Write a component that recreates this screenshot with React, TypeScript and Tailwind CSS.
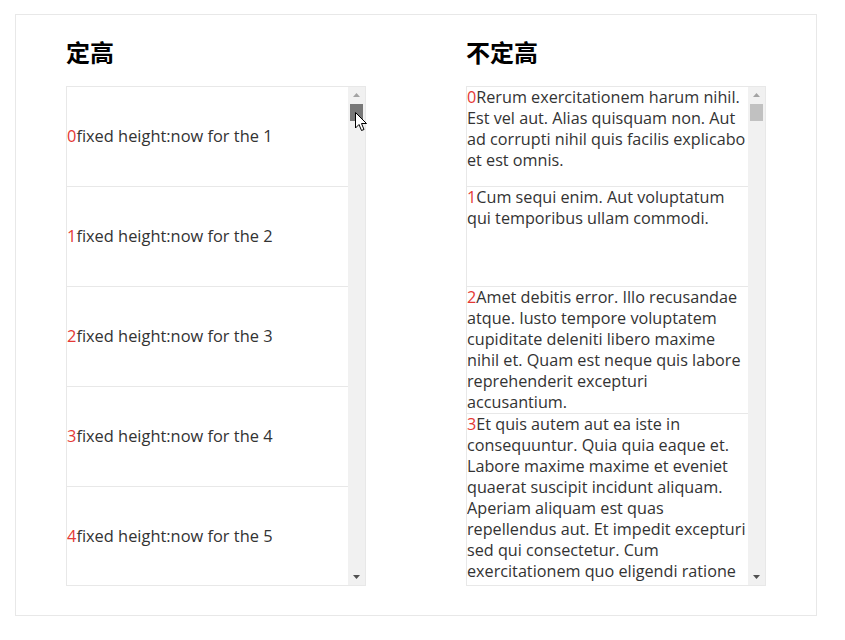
const fixedItems = [0, 1, 2, 3, 4]

const varItems = [
  "Rerum exercitationem harum nihil. Est vel aut. Alias quisquam non. Aut ad corrupti nihil quis facilis explicabo et est omnis.",
  "Cum sequi enim. Aut voluptatum qui temporibus ullam commodi.",
  "Amet debitis error. Illo recusandae atque. Iusto tempore voluptatem cupiditate deleniti libero maxime nihil et. Quam est neque quis labore reprehenderit excepturi accusantium.",
  "Et quis autem aut ea iste in consequuntur. Quia quia eaque et. Labore maxime maxime et eveniet quaerat suscipit incidunt aliquam. Aperiam aliquam est quas repellendus aut. Et impedit excepturi sed qui consectetur. Cum exercitationem quo eligendi ratione sit.",
]

const ScrollBar = ({ active }: { active?: boolean }) => (
  <div className="relative w-[17px] shrink-0 bg-[#f1f1f1]">
    <svg className="absolute left-[4px] top-[5px]" width="9" height="6" viewBox="0 0 9 6">
      <path d="M4.5 1 L8 5 L1 5 Z" fill="#a3a3a3" />
    </svg>
    <div
      className={
        active
          ? "absolute left-[2px] top-[17px] h-[17px] w-[13px] bg-[#787878]"
          : "absolute left-[2px] top-[17px] h-[17px] w-[13px] bg-[#c1c1c1]"
      }
    />
    <svg className="absolute bottom-[5px] left-[4px]" width="9" height="6" viewBox="0 0 9 6">
      <path d="M1 1 L8 1 L4.5 5 Z" fill="#505050" />
    </svg>
  </div>
)

const Cursor = () => (
  <svg className="absolute left-[355px] top-[112px]" width="13" height="21" viewBox="0 0 13 21">
    <path
      d="M0.5 0.5 L0.5 16 L4 12.5 L6.5 18.5 L9 17.5 L6.5 11.5 L11.5 11.5 Z"
      fill="#fff"
      stroke="#000"
      strokeWidth="1"
      strokeLinejoin="miter"
    />
  </svg>
)

export default function App() {
  return (
    <div className="relative min-h-[640px] bg-white pl-[15px] pt-[14px] font-['Open_Sans','Noto_Sans_CJK_SC',sans-serif] [font-variant-ligatures:none]">
      <div className="flex w-[802px] gap-[100px] border border-[#e8e8e8] px-[50px] pb-[29px] pt-[25px]">
        <div className="w-[300px]">
          <h2 className="mb-[22px] h-[24px] text-[24px] leading-[24px] font-bold text-black font-['Noto_Sans_CJK_SC',sans-serif]">
            定高
          </h2>
          <div className="flex h-[500px] border border-[#e8e8e8]">
            <div className="flex-1 overflow-hidden">
              {fixedItems.map(i => (
                <div
                  key={i}
                  className="flex h-[100px] items-center border-b border-[#e8e8e8] text-[16.4px] text-[#333]"
                >
                  <span className="text-[#e53935]">{i}</span>fixed height:now for the {i + 1}
                </div>
              ))}
            </div>
            <ScrollBar active />
          </div>
        </div>
        <div className="w-[300px]">
          <h2 className="mb-[22px] h-[24px] text-[24px] leading-[24px] font-bold text-black font-['Noto_Sans_CJK_SC',sans-serif]">
            不定高
          </h2>
          <div className="flex h-[500px] border border-[#e8e8e8]">
            <div className="flex-1 overflow-hidden">
              {varItems.map((text, i) => (
                <div
                  key={i}
                  className="min-h-[100px] border-b border-[#e8e8e8] text-[16.2px] leading-[21px] text-[#333]"
                >
                  <span className="text-[#e53935]">{i}</span>
                  {text}
                </div>
              ))}
            </div>
            <ScrollBar />
          </div>
        </div>
      </div>
      <Cursor />
    </div>
  )
}
